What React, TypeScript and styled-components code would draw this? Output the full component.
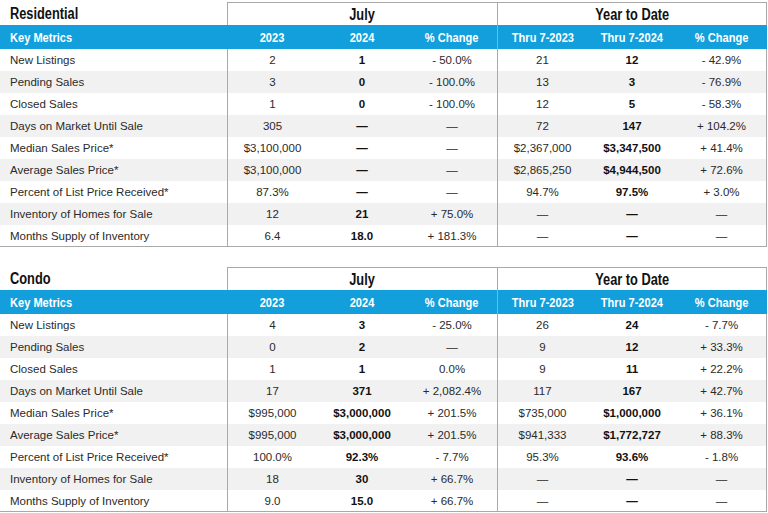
import styled, {createGlobalStyle} from "styled-components";

const GlobalStyle = createGlobalStyle`
  body {
    margin: 0;
    background: #ffffff;
    font-family: "Liberation Sans", Arial, Helvetica, sans-serif;
    color: #1f1f1f;
  }
`;

const BLUE = "#129fdb";
const LINE = "#a9a9a9";

const Page = styled.div`
  width: 768px;
  padding-top: 2px;
  display: flex;
  flex-direction: column;
  gap: 20px;
`;

const Table = styled.div`
  width: 767px;
  display: flex;
  flex-direction: column;
`;

const Row = styled.div`
  display: grid;
  grid-template-columns: 227px repeat(6, 90px);
`;

const TitleRow = styled.div`
  display: grid;
  grid-template-columns: 227px 270px 270px;
  height: 23px;
`;

// condensed bold face for headings (no narrow font installed, so squeeze it)
const Narrow = styled.span<{$left?: boolean; $squeeze?: number}>`
  display: inline-block;
  white-space: nowrap;
  transform: scaleX(${(p) => p.$squeeze ?? 0.82});
  transform-origin: ${(p) => (p.$left ? "left center" : "center center")};
`;

const Title = styled.div<{$group?: boolean; $last?: boolean}>`
  display: flex;
  align-items: center;
  justify-content: ${(p) => (p.$group ? "center" : "flex-start")};
  padding-left: ${(p) => (p.$group ? "0" : "10px")};
  padding-top: 1px;
  font-weight: bold;
  font-size: 16px;
  color: #111;
  box-sizing: border-box;
  border-top: ${(p) => (p.$group ? `1px solid ${LINE}` : "none")};
  border-left: ${(p) => (p.$group ? `1px solid ${LINE}` : "none")};
  border-right: ${(p) => (p.$last ? `1px solid ${LINE}` : "none")};
`;

const HeadRow = styled(Row)`
  height: 24px;
  background: ${BLUE};
`;

const HeadCell = styled.div<{$left?: boolean; $divider?: boolean}>`
  display: flex;
  align-items: center;
  justify-content: ${(p) => (p.$left ? "flex-start" : "center")};
  padding-left: ${(p) => (p.$left ? "10px" : "0")};
  font-weight: bold;
  font-size: 13.5px;
  color: #ffffff;
  box-sizing: border-box;
  border-left: ${(p) => (p.$divider ? "1px solid rgba(255,255,255,0.35)" : "none")};
`;

const DataRow = styled(Row)<{$shade: boolean; $end: boolean}>`
  height: 22px;
  background: ${(p) => (p.$shade ? "#f1f1f1" : "#ffffff")};
  box-sizing: border-box;
  border-bottom: ${(p) => (p.$end ? `1px solid ${LINE}` : "none")};
`;

const Cell = styled.div<{$left?: boolean; $strong?: boolean; $divider?: boolean; $last?: boolean}>`
  display: flex;
  align-items: center;
  justify-content: ${(p) => (p.$left ? "flex-start" : "center")};
  padding-left: ${(p) => (p.$left ? "10px" : "0")};
  font-size: 11.5px;
  font-weight: ${(p) => (p.$strong ? "bold" : "normal")};
  color: ${(p) => (p.$strong ? "#111" : "#2a2a2a")};
  white-space: nowrap;
  box-sizing: border-box;
  border-left: ${(p) => (p.$divider ? `1px solid ${LINE}` : "none")};
  border-right: ${(p) => (p.$last ? `1px solid ${LINE}` : "none")};
`;

type Metric = [string, string, string, string, string, string, string];

const D = "—";

const residential: Metric[] = [
  ["New Listings", "2", "1", "- 50.0%", "21", "12", "- 42.9%"],
  ["Pending Sales", "3", "0", "- 100.0%", "13", "3", "- 76.9%"],
  ["Closed Sales", "1", "0", "- 100.0%", "12", "5", "- 58.3%"],
  ["Days on Market Until Sale", "305", D, D, "72", "147", "+ 104.2%"],
  ["Median Sales Price*", "$3,100,000", D, D, "$2,367,000", "$3,347,500", "+ 41.4%"],
  ["Average Sales Price*", "$3,100,000", D, D, "$2,865,250", "$4,944,500", "+ 72.6%"],
  ["Percent of List Price Received*", "87.3%", D, D, "94.7%", "97.5%", "+ 3.0%"],
  ["Inventory of Homes for Sale", "12", "21", "+ 75.0%", D, D, D],
  ["Months Supply of Inventory", "6.4", "18.0", "+ 181.3%", D, D, D],
];

const condo: Metric[] = [
  ["New Listings", "4", "3", "- 25.0%", "26", "24", "- 7.7%"],
  ["Pending Sales", "0", "2", D, "9", "12", "+ 33.3%"],
  ["Closed Sales", "1", "1", "0.0%", "9", "11", "+ 22.2%"],
  ["Days on Market Until Sale", "17", "371", "+ 2,082.4%", "117", "167", "+ 42.7%"],
  ["Median Sales Price*", "$995,000", "$3,000,000", "+ 201.5%", "$735,000", "$1,000,000", "+ 36.1%"],
  ["Average Sales Price*", "$995,000", "$3,000,000", "+ 201.5%", "$941,333", "$1,772,727", "+ 88.3%"],
  ["Percent of List Price Received*", "100.0%", "92.3%", "- 7.7%", "95.3%", "93.6%", "- 1.8%"],
  ["Inventory of Homes for Sale", "18", "30", "+ 66.7%", D, D, D],
  ["Months Supply of Inventory", "9.0", "15.0", "+ 66.7%", D, D, D],
];

const headers = ["2023", "2024", "% Change", "Thru 7-2023", "Thru 7-2024", "% Change"];

const MetricsTable = ({title, rows}: {title: string; rows: Metric[]}) => (
  <Table>
    <TitleRow>
      <Title>
        <Narrow $left $squeeze={0.8}>{title}</Narrow>
      </Title>
      <Title $group>
        <Narrow $squeeze={0.8}>July</Narrow>
      </Title>
      <Title $group $last>
        <Narrow $squeeze={0.8}>Year to Date</Narrow>
      </Title>
    </TitleRow>
    <HeadRow>
      <HeadCell $left>
        <Narrow $left>Key Metrics</Narrow>
      </HeadCell>
      {headers.map((h, i) => (
        <HeadCell key={i} $divider={i === 3}>
          <Narrow>{h}</Narrow>
        </HeadCell>
      ))}
    </HeadRow>
    {rows.map((r, idx) => (
      <DataRow key={r[0]} $shade={idx % 2 === 1} $end={idx === rows.length - 1}>
        <Cell $left>{r[0]}</Cell>
        {r.slice(1).map((v, i) => (
          <Cell
            key={i}
            $strong={i === 1 || i === 4}
            $divider={i === 0 || i === 3}
            $last={i === 5}
          >
            {v}
          </Cell>
        ))}
      </DataRow>
    ))}
  </Table>
);

const App = () => (
  <>
    <GlobalStyle />
    <Page>
      <MetricsTable title="Residential" rows={residential} />
      <MetricsTable title="Condo" rows={condo} />
    </Page>
  </>
);

export default App;
